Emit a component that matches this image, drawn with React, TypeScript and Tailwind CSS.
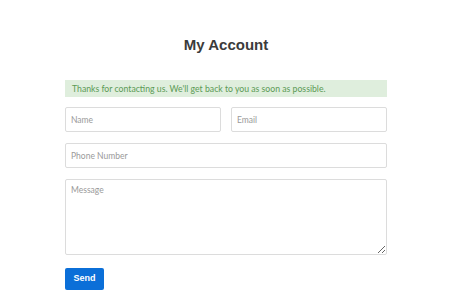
import React from 'react';

export default function App() {
  return (
    <div className="w-[474px] h-[299px] bg-white overflow-hidden">
      <div className="ml-[65px] w-[322px] pt-[36px]">
        <h1 className="text-center text-[15px] leading-[18px] font-bold text-[#3b3b3b] font-['Liberation_Sans',Arial,sans-serif]">
          My Account
        </h1>

        {/* Success notice */}
        <div className="mt-[26px] h-[17px] bg-[#dfeedd] pl-[7px] flex items-center text-[8.7px] text-[#5b9a55] font-['Lato',sans-serif]">
          Thanks for contacting us. We'll get back to you as soon as possible.
        </div>

        <form className="mt-[10px] flex flex-col gap-[11px] font-['Lato',sans-serif]">
          <div className="flex gap-[10px]">
            <input
              placeholder="Name"
              className="w-[156px] h-[25px] border border-[#dcdcdc] rounded-[2px] px-[5px] text-[8.5px] placeholder:text-[#9a9a9a] outline-none"
            />
            <input
              placeholder="Email"
              className="flex-1 h-[25px] border border-[#dcdcdc] rounded-[2px] px-[5px] text-[8.5px] placeholder:text-[#9a9a9a] outline-none"
            />
          </div>
          <input
            placeholder="Phone Number"
            className="h-[25px] border border-[#dcdcdc] rounded-[2px] px-[5px] text-[8.5px] placeholder:text-[#9a9a9a] outline-none"
          />
          <textarea
            placeholder="Message"
            className="h-[76px] border border-[#dcdcdc] rounded-[2px] px-[5px] py-[4px] text-[8.5px] placeholder:text-[#9a9a9a] outline-none"
          />
          <div className="flex pt-[2px]">
            <button
              type="button"
              className="w-[39px] h-[22px] bg-[#0b6fd8] rounded-[2px] text-white text-[9px] font-bold font-['Liberation_Sans',Arial,sans-serif]"
            >
              Send
            </button>
          </div>
        </form>
      </div>
    </div>
  );
}
